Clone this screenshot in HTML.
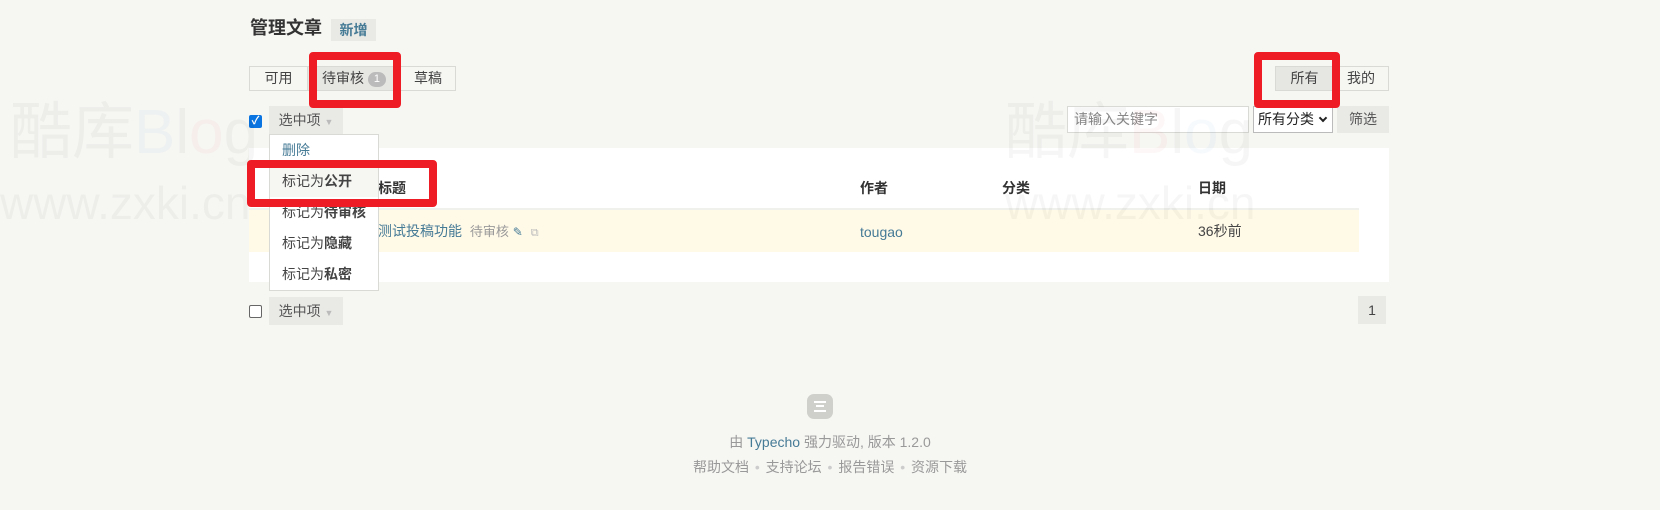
<!DOCTYPE html>
<html><head><meta charset="utf-8"><style>
*{margin:0;padding:0;box-sizing:border-box}
body{width:1660px;height:510px;background:#f6f6f3;font-family:"Liberation Sans","Noto Sans CJK SC",sans-serif;font-size:14px;color:#444;position:relative;overflow:hidden}
.a{position:absolute;line-height:20px}
.btn{position:absolute;background:#e9e9e6;color:#555;text-align:center}
.tab{position:absolute;border:1px solid #d9d9d6;height:25px;line-height:23px;text-align:center;color:#444;background:#f6f6f3}
.red{position:absolute;border:8px solid #ee1c25;border-radius:4px}
.wm{position:absolute;color:rgba(0,0,0,0.035);font-size:62px;white-space:nowrap;line-height:1;z-index:5;pointer-events:none}
.cb{position:absolute;width:13px;height:13px;border:1px solid #666;border-radius:2px;background:#fff}
.menu div{height:31px;line-height:31px;padding-left:12px;color:#444}
b{font-weight:bold}
</style></head><body>
<div class="wm" style="left:10px;top:102px">酷库<span style="color:rgba(60,140,220,.045)">B</span>l<span style="color:rgba(230,60,60,.045)">o</span>g</div>
<div class="wm" style="left:0;top:180px;font-size:46px">www.zxki.cn</div>
<div class="wm" style="left:1005px;top:102px">酷库<span style="color:rgba(230,60,60,.045)">B</span>l<span style="color:rgba(60,140,220,.045)">o</span>g</div>
<div class="wm" style="left:1005px;top:180px;font-size:46px">www.zxki.cn</div>

<div class="a" style="left:250px;top:18px;font-size:18px;font-weight:bold;color:#333">管理文章</div>
<div class="btn" style="left:331px;top:19px;width:45px;height:22px;line-height:22px;color:#467b96;font-weight:bold">新增</div>

<div class="tab" style="left:249px;top:66px;width:59px">可用</div>
<div class="tab" style="left:307px;top:66px;width:87px;background:#e6e6e3;text-align:left;padding-left:14px">待审核 <span style="display:inline-block;background:#bbb;color:#fff;border-radius:8px;width:18px;height:15px;line-height:15px;font-size:11px;text-align:center;vertical-align:1px">1</span></div>
<div class="tab" style="left:400px;top:66px;width:56px">草稿</div>
<div class="tab" style="left:1275px;top:66px;width:59px;background:#e6e6e3">所有</div>
<div class="tab" style="left:1333px;top:66px;width:56px">我的</div>

<div class="cb" style="left:249px;top:115px;background:#0a74e0;border-color:#0a74e0;color:#fff;font-size:11px;line-height:11px;text-align:center;font-weight:bold">✓</div>
<div class="btn" style="left:269px;top:106px;width:74px;height:28px;line-height:28px">选中项 <span style="color:#bbb;font-size:9px">▼</span></div>

<div class="a" style="left:1067px;top:106px;width:182px;height:27px;border:1px solid #d9d9d6;background:#fff;color:#888;line-height:25px;padding-left:6px">请输入关键字</div>
<div class="a" style="left:1253px;top:106px;width:80px;height:27px;border:1px solid #bbb;background:#fff;color:#222;line-height:25px;padding-left:4px">所有分类 <span style="display:inline-block;width:6px;height:6px;border-right:2px solid #222;border-bottom:2px solid #222;transform:rotate(45deg);vertical-align:3px;margin-left:2px"></span></div>
<div class="btn" style="left:1337px;top:106px;width:52px;height:27px;line-height:27px">筛选</div>

<div class="a" style="left:249px;top:148px;width:1140px;height:134px;background:#fff"></div>
<div class="a" style="left:249px;top:208px;width:1110px;height:2px;background:#f0f0ec"></div>
<div class="a" style="left:249px;top:210px;width:1110px;height:42px;background:#fff9e8"></div>
<div class="a" style="left:378px;top:178px;font-weight:bold;color:#333">标题</div>
<div class="a" style="left:860px;top:178px;font-weight:bold;color:#333">作者</div>
<div class="a" style="left:1002px;top:178px;font-weight:bold;color:#333">分类</div>
<div class="a" style="left:1198px;top:178px;font-weight:bold;color:#333">日期</div>
<div class="a" style="left:378px;top:221px;color:#467b96">测试投稿功能 <span style="color:#999;font-size:13px;margin-left:4px">待审核</span> <span style="color:#467b96;font-size:12px">✎</span> <span style="color:#bbb;font-size:11px;margin-left:4px">⧉</span></div>
<div class="a" style="left:860px;top:221px;color:#467b96;height:20px;line-height:20px;padding-top:1px">tougao</div>
<div class="a" style="left:1198px;top:221px;color:#444">36秒前</div>

<div class="a menu" style="left:269px;top:134px;width:110px;height:157px;background:#fff;border:1px solid #d9d9d6">
<div style="color:#467b96;height:31px">删除</div>
<div style="background:#f6f6f3">标记为<b>公开</b></div>
<div>标记为<b>待审核</b></div>
<div>标记为<b>隐藏</b></div>
<div>标记为<b>私密</b></div>
</div>

<div class="cb" style="left:249px;top:305px"></div>
<div class="btn" style="left:269px;top:297px;width:74px;height:28px;line-height:28px">选中项 <span style="color:#bbb;font-size:9px">▼</span></div>
<div class="btn" style="left:1358px;top:296px;width:28px;height:28px;line-height:28px;color:#444">1</div>

<div class="red" style="left:309px;top:52px;width:92px;height:56px;z-index:6"></div>
<div class="red" style="left:1254px;top:52px;width:86px;height:56px;z-index:6"></div>
<div class="red" style="left:247px;top:160px;width:190px;height:47px;z-index:6"></div>

<div class="a" style="left:807px;top:394px;width:26px;height:25px;border-radius:7px;background:#cfcfcc"><div style="position:absolute;left:7px;top:7px;width:12px;height:2px;background:#fff"></div><div style="position:absolute;left:9px;top:11px;width:8px;height:2px;background:#fff"></div><div style="position:absolute;left:7px;top:16px;width:12px;height:2px;background:#fff"></div></div>
<div class="a" style="left:0;width:1660px;top:432px;text-align:center;color:#999">由 <span style="color:#467b96">Typecho</span> 强力驱动, 版本 1.2.0</div>
<div class="a" style="left:0;width:1660px;top:457px;text-align:center;color:#999">帮助文档 <span style="color:#ccc;margin:0 2px">•</span> 支持论坛 <span style="color:#ccc;margin:0 2px">•</span> 报告错误 <span style="color:#ccc;margin:0 2px">•</span> 资源下载</div>
</body></html>
